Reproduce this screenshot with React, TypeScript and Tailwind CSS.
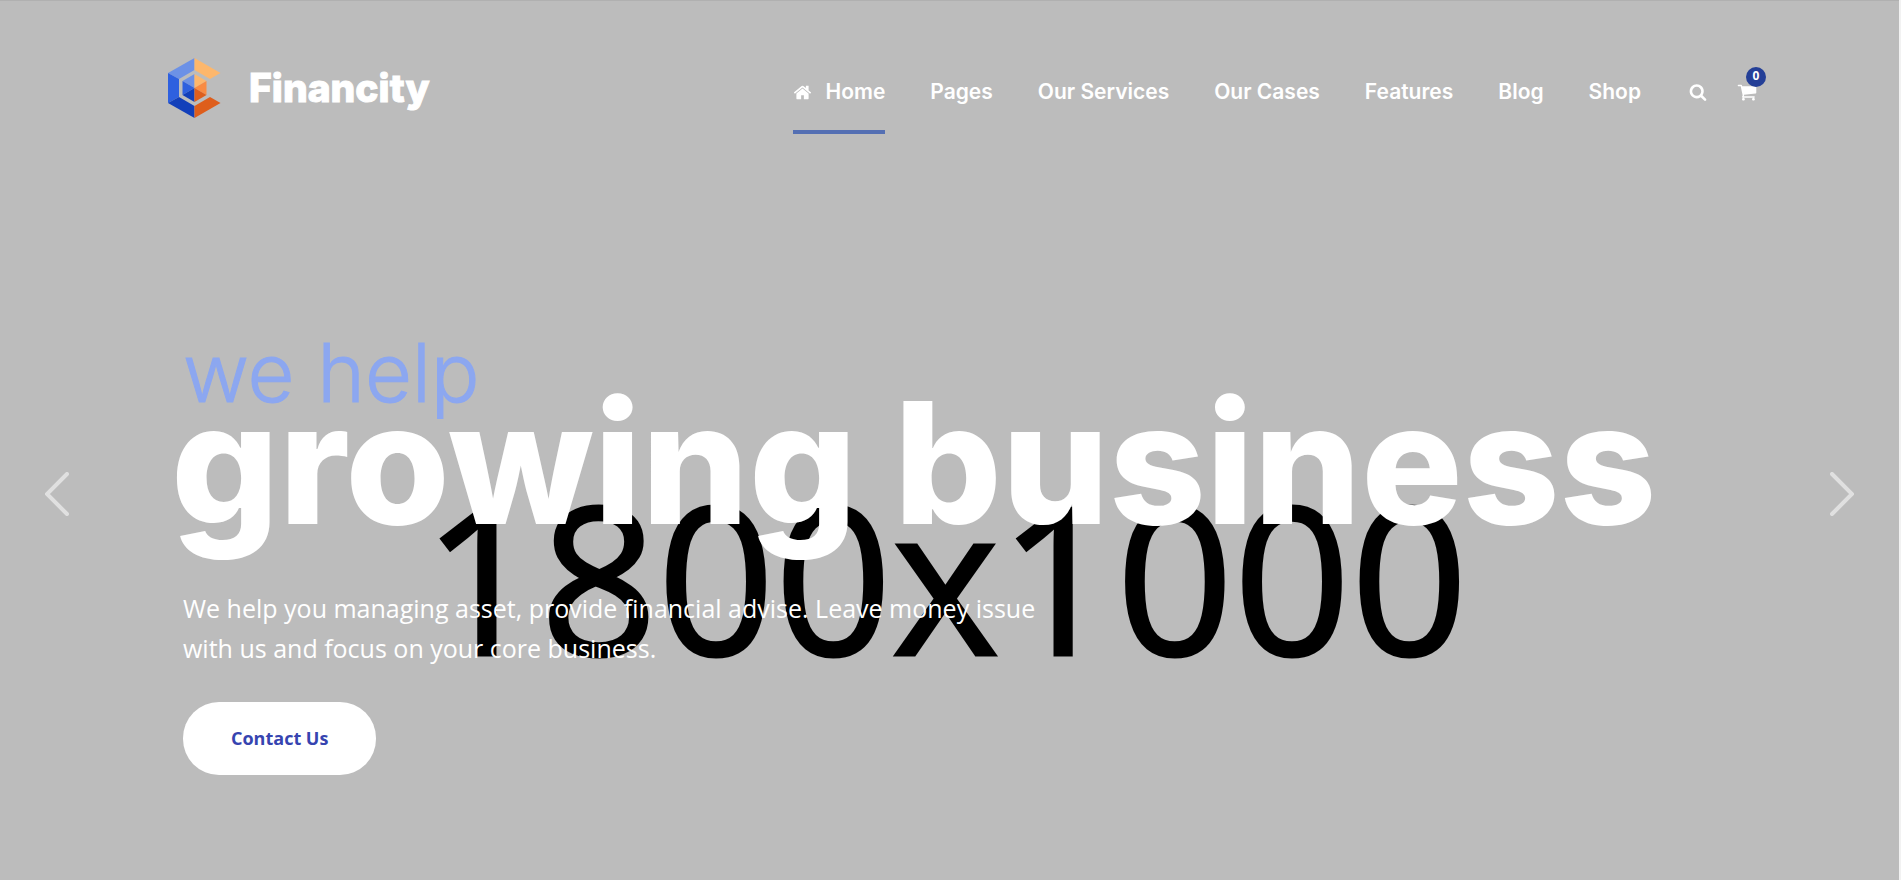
const links = ["Pages", "Our Services", "Our Cases", "Features", "Blog", "Shop"];

const HOME =
  "M1472 992v480q0 26-19 45t-45 19h-384v-384h-256v384h-384q-26 0-45-19t-19-45v-480q0-1 .5-3t.5-3l575-474 575 474q1 2 1 6zm223-69l-62 74q-8 9-21 11h-3q-13 0-21-7l-692-577-692 577q-12 8-24 7-13-2-21-11l-62-74q-8-10-7-23.5t11-21.5l719-599q32-26 76-26t76 26l244 204v-195q0-14 9-23t23-9h192q14 0 23 9t9 23v408l219 182q10 8 11 21.5t-7 23.5z";
const SEARCH =
  "M1216 832q0-185-131.5-316.5t-316.5-131.5-316.5 131.5-131.5 316.5 131.5 316.5 316.5 131.5 316.5-131.5 131.5-316.5zm512 832q0 52-38 90t-90 38q-54 0-90-38l-343-342q-179 124-399 124-143 0-273.5-55.5t-225-150-150-225-55.5-273.5 55.5-273.5 150-225 225-150 273.5-55.5 273.5 55.5 225 150 150 225 55.5 273.5q0 220-124 399l343 343q37 37 37 90z";
const CART =
  "M704 1536q0 52-38 90t-90 38-90-38-38-90 38-90 90-38 90 38 38 90zm896 0q0 52-38 90t-90 38-90-38-38-90 38-90 90-38 90 38 38 90zm128-1088v512q0 24-16.5 42.5t-40.5 21.5l-1044 122q13 60 13 70 0 16-24 64h920q26 0 45 19t19 45-19 45-45 19h-1024q-26 0-45-19t-19-45q0-11 8-31.5t16-36 21.5-40 15.5-29.5l-177-823h-204q-26 0-45-19t-19-45 19-45 45-19h256q16 0 28.5 6.500t19.500 15.500 13 24.500 8 26 5.500 29.500 4.500 26h1201q26 0 45 19t19 45z";

function Icon({ d, size }: { d: string; size: number }) {
  return (
    <svg width={size} height={size} viewBox="0 0 1792 1792" fill="currentColor" aria-hidden="true">
      <path d={d} />
    </svg>
  );
}

function LogoMark() {
  return (
    <svg width="53" height="60" viewBox="0 0 53 60" aria-hidden="true">
      <path d="M0 15 26.500 0V12L11 21Z" fill="#6c91e6" />
      <path d="M26.500 0 52.500 15 42 21 26.500 12Z" fill="#fdb76c" />
      <path d="M0 15 11 21V39L0 45Z" fill="#2e60df" />
      <path d="M0 45 11 39 26.500 48V60Z" fill="#123fba" />
      <path d="M26.500 60V48L42 39 52.500 45Z" fill="#de5e1c" />
      <path d="M26.500 16V30L14.500 23Z" fill="#6c91e6" />
      <path d="M26.500 16 38.500 23 26.500 30Z" fill="#fdb76c" />
      <path d="M14.500 23 26.500 30 14.500 37Z" fill="#2e60df" />
      <path d="M38.500 23V37L26.500 30Z" fill="#f98b42" />
      <path d="M14.500 37 26.500 30V44Z" fill="#123fba" />
      <path d="M26.500 30 38.500 37 26.500 44Z" fill="#de5e1c" />
    </svg>
  );
}

function Header() {
  return (
    <header className="flex items-start justify-between pr-[142px] pl-[168px] pt-[57px]">
      <a href="#" className="flex items-center gap-7">
        <LogoMark />
        <span className="font-['Inter',sans-serif] text-[39px] leading-[60px] font-extrabold [-webkit-text-stroke:1px_white]">
          Financity
        </span>
      </a>
      <div className="flex items-start pt-[18px] font-['Inter',sans-serif]">
        <nav aria-label="Main" className="flex gap-[45px] text-[21px] leading-8 font-semibold whitespace-nowrap">
          <a href="#" className="flex items-start gap-3.5 border-b-4 border-[#546fb3] pb-[22px]">
            <span className="flex h-8 items-center">
              <Icon d={HOME} size={19} />
            </span>
            Home
          </a>
          {links.map((l) => (
            <a key={l} href="#">{l}</a>
          ))}
        </nav>
        <button aria-label="Search" className="ml-12 flex h-8 items-center">
          <Icon d={SEARCH} size={18} />
        </button>
        <button aria-label="Cart" className="relative ml-[30px] flex h-8 items-center">
          <Icon d={CART} size={20} />
          <span className="absolute -top-[9px] left-[9px] size-5 rounded-full bg-[#243f97] text-center font-['Open_Sans',sans-serif] text-xs leading-[18px] font-bold">
            0
          </span>
        </button>
      </div>
    </header>
  );
}

function Arrow({ d }: { d: string }) {
  return (
    <svg width="24" height="44" viewBox="0 0 24 44" fill="none" stroke="currentColor" strokeWidth="4" strokeLinecap="round">
      <path d={d} />
    </svg>
  );
}

export default function App() {
  return (
    <div className="bg-[#f2f2f2] pr-0.5">
      <main className="relative isolate min-h-screen overflow-hidden border-t border-[#b0b0b0] bg-[#bcbcbc] text-white">
        <div
          aria-hidden="true"
          className="absolute inset-x-0 top-[435px] -z-10 pr-2 text-center font-['Open_Sans',sans-serif] text-[205px] leading-[280px] font-medium text-black [-webkit-text-stroke:3px_black]"
        >
          1800x1000
        </div>
        <Header />
        <section className="flex items-start justify-between px-[45px] pt-[194px]">
          <button aria-label="Previous slide" className="mt-36 text-[#e0e0e0]">
            <Arrow d="M22 2 2 22 22 42" />
          </button>
          <div className="flex-1 pl-[114px]">
            <h1 className="whitespace-nowrap font-['Inter',sans-serif]">
              <span className="block text-[81px] leading-[90px] font-light text-[#8ca7f0] [-webkit-text-stroke:1px_#8ca7f0]">we help</span>
              <span className="-ml-3 block text-[169px] leading-[90px] font-extrabold">growing business</span>
            </h1>
            <p className="mt-20 max-w-[900px] font-['Open_Sans',sans-serif] text-[25px] leading-10">
              We help you managing asset, provide financial advise. Leave money issue with us and focus on your core business.
            </p>
            <a
              href="#"
              className="mt-[34px] inline-block rounded-[36px] bg-white px-12 font-['Open_Sans',sans-serif] text-lg leading-[73px] font-bold text-[#3644b0]"
            >
              Contact Us
            </a>
          </div>
          <button aria-label="Next slide" className="mt-36 text-[#e0e0e0]">
            <Arrow d="M2 2 22 22 2 42" />
          </button>
        </section>
      </main>
    </div>
  );
}
